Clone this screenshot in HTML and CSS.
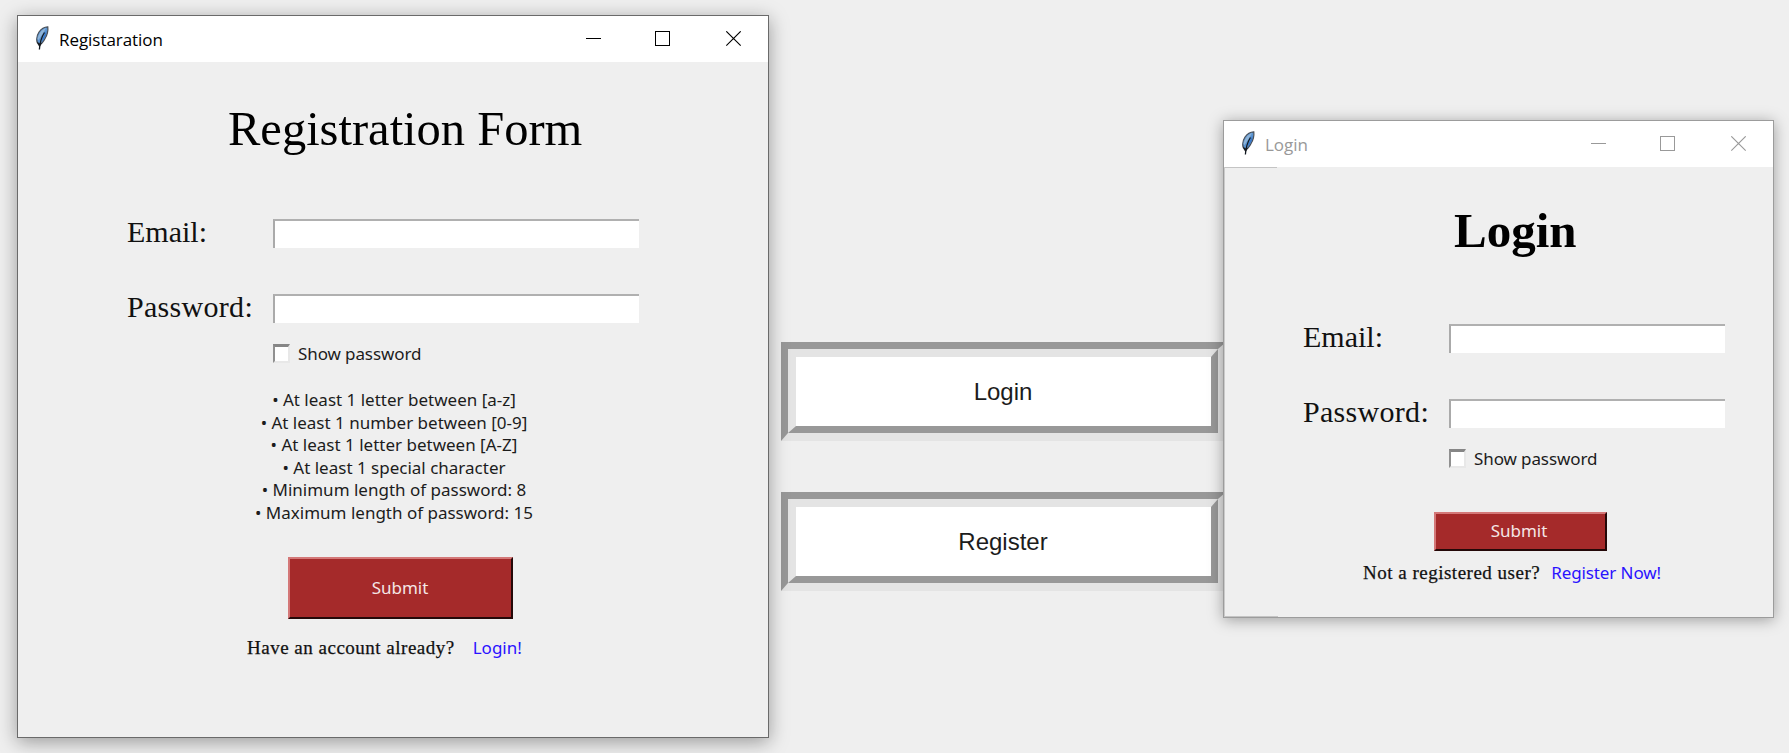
FILE: index.html
```html
<!DOCTYPE html>
<html lang="en">
<head>
<meta charset="utf-8">
<title>Registration and Login</title>
<link rel="stylesheet" href="styles.css">
</head>
<body>
<svg class="defs" width="0" height="0">
  <symbol id="feather" viewBox="0 0 15 24">
    <path d="M4.200 19C.8 16.500 1 10.500 4 6 6.200 2.700 9 .9 12.800.8c.5 4-.5 8.200-3 12.200C8.300 16 6.500 18 4.200 19z" fill="#5b94d2" stroke="#4a5058" stroke-width="1.200"/>
    <path d="M2.500 13C3.500 8 6.500 3.500 11 2L7.500 8 3.500 14z" fill="#8fb4d8"/>
    <path d="M7 13.500L11.500 4.500l-.6 5-3.500 6z" fill="#3a78c8"/>
    <path d="M9.500 6.500C7.500 9.500 5 14.500 4.400 23.500" fill="none" stroke="#111820" stroke-width="1.300"/>
    <path d="M1.800 15.500l2.700 6 2.500-4.500-2.300.5z" fill="#161a20"/>
  </symbol>
  <symbol id="controls" viewBox="0 0 156 16">
    <g fill="none" stroke="currentColor" shape-rendering="crispEdges">
      <path d="M0 7.500h15M69.500.5h14v14h-14z"/>
    </g>
    <path d="M140.300.3l14.400 14.400M154.700.3l-14.400 14.400" fill="none" stroke="currentColor" stroke-width="1.100"/>
  </symbol>
</svg>
<main class="desktop">
  <nav class="launcher">
    <div class="choice"><div class="choice-face">Login</div></div>
    <div class="choice"><div class="choice-face">Register</div></div>
  </nav>

  <section class="window register">
    <header class="titlebar">
      <svg class="feather"><use href="#feather"/></svg>
      <span class="caption">Registaration</span>
      <svg class="controls"><use href="#controls"/></svg>
    </header>
    <form class="content">
      <h1 class="heading">Registration Form</h1>
      <div class="row"><label class="label">Email:</label><div class="field"></div></div>
      <div class="row"><label class="label wide">Password:</label><div class="field"></div></div>
      <div class="show"><span class="check"></span><span class="ui">Show password</span></div>
      <div class="rules">
        <div>• At least 1 letter between [a-z]</div>
        <div>• At least 1 number between [0-9]</div>
        <div>• At least 1 letter between [A-Z]</div>
        <div>• At least 1 special character</div>
        <div>• Minimum length of password: 8</div>
        <div>• Maximum length of password: 15</div>
      </div>
      <div class="submit">Submit</div>
      <div class="switch"><span class="question">Have an account already?</span><span class="link">Login!</span></div>
    </form>
  </section>

  <section class="window login">
    <header class="titlebar">
      <svg class="feather"><use href="#feather"/></svg>
      <span class="caption">Login</span>
      <svg class="controls"><use href="#controls"/></svg>
    </header>
    <form class="content">
      <h1 class="heading">Login</h1>
      <div class="row"><label class="label">Email:</label><div class="field"></div></div>
      <div class="row"><label class="label wide">Password:</label><div class="field"></div></div>
      <div class="show"><span class="check"></span><span class="ui">Show password</span></div>
      <div class="submit">Submit</div>
      <div class="switch"><span class="question">Not a registered user?</span><span class="link">Register Now!</span></div>
    </form>
  </section>
</main>
</body>
</html>
```
FILE: styles.css
```css
* { box-sizing: border-box; }
body { margin: 0; background: #efefef; overflow: hidden; }
.defs { position: absolute; }
.desktop { position: relative; width: 1789px; height: 753px; overflow: hidden; }

.launcher {
  position: absolute; left: 781px; top: 342px;
  display: flex; flex-direction: column; gap: 51px;
}
.choice {
  width: 445px; height: 99px;
  border: solid; border-width: 7px 8px 8px 7px;
  border-color: #989898 #e4e4e4 #e4e4e4 #989898;
}
.choice-face {
  height: 84px; border: solid; border-width: 8px 7px 7px 8px;
  border-color: #e4e4e4 #989898 #989898 #e4e4e4;
  background: #fff; color: #1c1c1c; text-align: center; padding-right: 1px;
  font: 24px/70px "Liberation Sans", Arial, sans-serif;
}

.window {
  position: absolute; background: #efefef; border: 1px solid #6a6a6a;
  font-family: "Noto Sans", "Open Sans", sans-serif; white-space: nowrap;
}
.register { left: 17px; top: 15px; width: 752px; height: 723px; box-shadow: 0 4px 18px rgba(0,0,0,.36); }
.login { left: 1223px; top: 120px; width: 551px; height: 498px; border-color: #9c9c9c; box-shadow: 0 2px 14px rgba(0,0,0,.34); }

.titlebar { display: flex; align-items: flex-start; height: 46px; background: #fff; padding: 10px 26px 0 17px; color: #000; }
.feather { width: 15px; height: 24px; flex: none; }
.caption { font: 17px/28px "Open Sans", "Noto Sans", sans-serif; letter-spacing: -.05px; margin-left: 9px; flex: 1; }
.controls { width: 156px; height: 16px; margin-top: 5px; flex: none; }
.login .titlebar { color: #999; }

.content { display: flex; flex-direction: column; align-items: flex-start; }
.heading { margin: 39px 0 62px 210px; font: 48.500px/56px "Liberation Serif", "Times New Roman", serif; color: #000; }
.row { display: flex; align-items: flex-start; height: 29px; margin: 0 0 46px 109px; }
.label { width: 146px; font: 30px/26px "Liberation Serif", "Times New Roman", serif; color: #111; }
.label.wide { letter-spacing: .3px; }
.field { width: 366px; height: 29px; background: #fff; border: solid #aaa; border-width: 2px 0 0 2px; border-top-color: #b0b0b0; }
.show { display: flex; height: 20px; margin: -25px 0 0 255px; gap: 8px; }
.check { width: 17px; height: 19px; background: #fff; border: solid; border-width: 3px 2px 2px 2px; border-color: #868686 #e8e8e8 #e8e8e8 #909090; }
.ui { font-size: 17px; line-height: 20px; letter-spacing: -.1px; color: #1c1c1c; }
.rules { width: 300px; margin: 25px 0 0 226px; text-align: center; font-size: 17px; line-height: 22.500px; color: #1c1c1c; }
.submit {
  width: 225px; height: 62px; margin: 33px 0 0 270px; background: #a52a2a; color: #f4e6e6;
  border: solid; border-width: 2px; border-color: #d47878 #240808 #240808 #d47878;
  font-size: 17px; line-height: 57px; text-align: center; padding-right: 1px;
}
.switch { display: flex; align-items: baseline; height: 24px; margin: 17px 0 0 229px; gap: 18px; line-height: 24px; }
.question { font-family: "Liberation Serif", "Times New Roman", serif; font-size: 19px; letter-spacing: .5px; color: #111; -webkit-text-stroke: .25px #111; }
.link { font-size: 17px; color: #2a12ff; }

.login .content { height: 450px; border-left: 1px solid #cacaca; background: linear-gradient(#c4c4c4, #c4c4c4) 0 0 / 52px 1px no-repeat, linear-gradient(#c4c4c4, #c4c4c4) 0 100% / 53px 1px no-repeat; }
.login .heading { font-size: 49px; font-weight: 700; margin: 36px 0 65px 229px; }
.login .row { margin-left: 78px; }
.login .field { width: 276px; }
.login .show { margin-left: 224px; }
.login .submit { width: 173px; height: 39px; margin: 43px 0 0 209px; line-height: 34px; padding-right: 3px; }
.login .switch { margin: 10px 0 0 138px; gap: 11px; }
.login .link { letter-spacing: -.1px; }
```
